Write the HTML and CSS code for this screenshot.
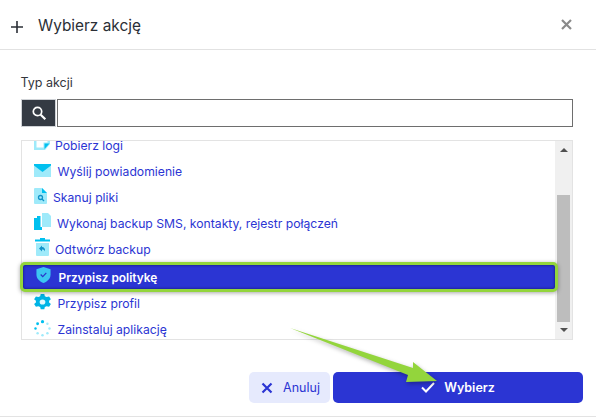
FILE: index.html
```html
<!DOCTYPE html>
<html lang="pl">
<head>
  <meta charset="UTF-8">
  <title>Wybierz akcję</title>
  <link rel="stylesheet" href="styles.css">
</head>
<body>
  <div class="dialog">
    <div class="header">
      <svg class="plus" width="14" height="14" viewBox="0 0 14 14"><path d="M7 1v12M1 7h12" stroke="#2b2f36" stroke-width="1.6"/></svg>
      <span class="title">Wybierz akcję</span>
      <svg class="close" width="11" height="11" viewBox="0 0 11 11"><path d="M1 1l9 9M10 1l-9 9" stroke="#8a8a8a" stroke-width="2.2"/></svg>
    </div>
    <div class="body">
      <div class="label">Typ akcji</div>
      <div class="search">
        <div class="search-btn">
          <svg width="16" height="16" viewBox="0 0 16 16"><circle cx="6.5" cy="6.5" r="4.2" fill="none" stroke="#fff" stroke-width="1.7"/><path d="M9.7 9.7l4.6 4.6" stroke="#fff" stroke-width="2.2"/></svg>
        </div>
        <input class="search-input" type="text">
      </div>
      <div class="list-box">
        <div class="list">
          <div class="rows">
            <div class="row">
              <svg class="ico ico-logs" width="16" height="18" viewBox="0 0 16 18"><path d="M0 0h16v12l-5 6H0z" fill="#9feafa"/><path d="M2.500 0h11v10.500H9.500V15.500H2.500z" fill="#fff"/><path d="M10.500 17l5-5.500h-5z" fill="#00c0ef"/></svg>
              <span>Pobierz logi</span>
            </div>
            <div class="row">
              <svg class="ico ico-mail" width="17" height="13" viewBox="0 0 17 13"><path d="M0 0h17v13H0z" fill="#9feafa"/><path d="M0 0h17v1.500L8.500 8 0 1.500z" fill="#00c0ef"/></svg>
              <span>Wyślij powiadomienie</span>
            </div>
            <div class="row">
              <svg class="ico ico-scan" width="13" height="16" viewBox="0 0 13 16"><path d="M0 1a1 1 0 0 1 1-1h7l5 5v10a1 1 0 0 1-1 1H1a1 1 0 0 1-1-1z" fill="#9feafa"/><path d="M8 0l5 5H8z" fill="#00c0ef"/><circle cx="6.500" cy="9.500" r="2" fill="none" stroke="#1193c9" stroke-width="1.300"/><path d="M8 11l2 2" stroke="#1193c9" stroke-width="1.300"/></svg>
              <span>Skanuj pliki</span>
            </div>
            <div class="row">
              <svg class="ico ico-copy" width="17" height="17" viewBox="0 0 17 17"><path d="M0 5h3v12H0z" fill="#00c0ef"/><path d="M3 3h5v14H3z" fill="#00c0ef"/><path d="M8 0h6l3 3v11H8z" fill="#9feafa"/><path d="M6.500 2h1.500v12H6.500z" fill="#fff"/></svg>
              <span>Wykonaj backup SMS, kontakty, rejestr połączeń</span>
            </div>
            <div class="row">
              <svg class="ico ico-restore" width="15" height="18" viewBox="0 0 15 18"><path d="M5 0h5v1.500H15V3.500H0V1.500H5z" fill="#00c0ef"/><path d="M1 5h13v12a1 1 0 0 1-1 1H2a1 1 0 0 1-1-1z" fill="#9feafa"/><path d="M7 7.500L4 10.500 7 13.500V11.500c1.500 0 2.500.5 3 2 .5-3-1-4.500-3-4.500z" fill="#1193c9"/></svg>
              <span>Odtwórz backup</span>
            </div>
            <div class="row active">
              <svg class="ico ico-shield" width="15" height="16" viewBox="0 0 15 17"><path d="M7.500 0L15 2.500V8c0 4.500-3.500 7.500-7.500 9C3.500 15.500 0 12.500 0 8V2.500z" fill="#3cc6f2"/><path d="M4.500 8l2.200 2.200L10.500 6.300" fill="none" stroke="#2b35c9" stroke-width="1.300"/></svg>
              <span>Przypisz politykę</span>
            </div>
            <div class="row">
              <svg class="ico ico-gear" width="17" height="16" viewBox="0 0 16 17" preserveAspectRatio="none"><path d="M6.300 0h3.400l.5 2.300 1.700 1 2.300-.7 1.700 3-1.700 1.500v2l1.700 1.500-1.700 3-2.300-.7-1.700 1-.5 2.300H6.300l-.5-2.300-1.700-1-2.300.7-1.700-3 1.700-1.500v-2L.1 5.600l1.700-3 2.300.7 1.700-1z" fill="#00b4e6"/><circle cx="8" cy="8.500" r="2.700" fill="#e2f8fd"/></svg>
              <span>Przypisz profil</span>
            </div>
            <div class="row">
              <svg class="ico ico-app" width="17" height="17" viewBox="0 0 18 18"><g fill="#00c0ef"><circle cx="9" cy="1.800" r="1.700"/><circle cx="3.800" cy="4" r="1.500"/><circle cx="1.600" cy="9" r="1.300"/></g><g fill="#9feafa"><circle cx="14.200" cy="4" r="1.300"/><circle cx="16.400" cy="9" r="1.300"/><circle cx="14.200" cy="14" r="1.300"/><circle cx="9" cy="16.200" r="1.300"/><circle cx="3.800" cy="14" r="1.300"/></g></svg>
              <span>Zainstaluj aplikację</span>
            </div>
          </div>
        </div>
        <div class="scrollbar">
          <div class="arrow-up"></div>
          <div class="track"><div class="thumb"></div></div>
          <div class="arrow-down"></div>
        </div>
      </div>
    </div>
    <div class="footer">
      <button class="btn cancel">
        <svg width="12" height="12" viewBox="0 0 12 12"><path d="M1.500 1.500l9 9M10.500 1.500l-9 9" stroke="#2b35d3" stroke-width="2.200"/></svg>
        Anuluj
      </button>
      <button class="btn confirm">
        <svg width="14" height="11" viewBox="0 0 14 11"><path d="M1 5.500l4 4 8-8.500" fill="none" stroke="#fff" stroke-width="2"/></svg>
        Wybierz
      </button>
    </div>
  </div>
  <svg class="pointer" width="150" height="58" viewBox="0 0 150 58"><path d="M0 1L123 41 123 35 147 54 116 55 118 48z" fill="#93d53c"/></svg>
</body>
</html>
```

FILE: styles.css
```css
html, body {
  margin: 0;
  padding: 0;
}
body {
  width: 596px;
  height: 417px;
  overflow: hidden;
  background: #fff;
  font-family: Inter, "Liberation Sans", sans-serif;
  position: relative;
}
.dialog {
  height: 417px;
  box-sizing: border-box;
  border-bottom: 1px solid #e3e3e3;
}
.header {
  height: 50px;
  border-bottom: 1px solid #e2e2e2;
  display: flex;
  align-items: center;
  padding: 0 24px 0 10px;
  box-sizing: border-box;
}
.plus {
  margin-top: 4px;
}
.title {
  margin-left: 14px;
  font-size: 15.4px;
  color: #2b2f36;
  flex: 1;
  margin-top: 2px;
}
.close {
  margin-top: -1px;
}
.body {
  padding: 25px 23px 0 21px;
}
.label {
  font-size: 12.5px;
  line-height: 16px;
  color: #33363c;
  margin-bottom: 8px;
  margin-left: -0.5px;
}
.search {
  display: flex;
  height: 28px;
}
.search-btn {
  width: 35px;
  background: #343a43;
  border: 1px solid #cfd2d6;
  box-sizing: border-box;
  display: flex;
  align-items: center;
  justify-content: center;
}
.search-input {
  flex: 1;
  margin-left: 1px;
  border: 1px solid #6e6e6e;
  box-sizing: border-box;
  padding: 0;
  outline: none;
}
.list-box {
  margin-top: 13px;
  height: 200px;
  border: 1px solid #e3e3e3;
  box-sizing: border-box;
  display: flex;
}
.list {
  flex: 1;
  clip-path: inset(0 -10px);
  position: relative;
  z-index: 1;
}
.rows {
  margin-top: -9px;
}
.row {
  height: 26px;
  display: flex;
  align-items: center;
  color: #2b35d3;
  font-size: 12.2px;
  padding-left: 12px;
}
.ico {
  flex: none;
}
.ico-logs { margin: 0 5px 8px 0; }
.ico-mail { margin: 0 6.5px 1px 0; }
.ico-scan { margin: 0 6px 2px 0; }
.ico-copy { margin: 0 6px 3px 0; }
.ico-restore { margin: 0 5px 4px 1px; }
.ico-shield { margin: 0 7.5px 4px 0; }
.ico-gear { margin: 0 6.5px 2px 0; }
.ico-app { margin: 0 6.5px 2px 0; }
.row.active {
  height: 30px;
  box-sizing: border-box;
  margin: 0 -3px -2px -2px;
  padding-left: 13px;
  background: #2b35d3;
  border: 3px solid #93d53c;
  border-radius: 5px;
  box-shadow: 0 1px 4px rgba(0, 0, 0, 0.35), inset 0 0 3px #10156e;
  color: #fff;
  font-size: 11.9px;
  font-weight: 600;
  position: relative;
}
.scrollbar {
  width: 17px;
  background: #f0f0f0;
  display: flex;
  flex-direction: column;
  align-items: center;
}
.arrow-up, .arrow-down {
  width: 0;
  height: 0;
  border-left: 4px solid transparent;
  border-right: 4px solid transparent;
}
.arrow-up {
  margin: 7px 0;
  border-bottom: 4px solid #505050;
}
.arrow-down {
  margin: 6px 0 7px;
  border-top: 4px solid #505050;
}
.track {
  flex: 1;
  width: 13px;
  padding-top: 36px;
  box-sizing: border-box;
}
.thumb {
  height: 127px;
  background: #bdbdbd;
}
.footer {
  display: flex;
  padding: 32px 13px 0 249px;
  gap: 3px;
}
.btn {
  height: 31px;
  border: 0;
  border-radius: 5px;
  padding: 0;
  display: flex;
  align-items: center;
  justify-content: center;
  font-family: inherit;
  font-size: 12.5px;
}
.cancel {
  width: 81px;
  gap: 10px;
  padding-left: 2px;
  background: #e6eafd;
  color: #2b35d3;
}
.confirm {
  width: 250px;
  gap: 9px;
  background: #2b35d3;
  color: #fff;
  font-weight: 600;
}
.pointer {
  position: absolute;
  left: 290px;
  top: 327px;
  filter: drop-shadow(1px 2px 2px rgba(0, 0, 0, 0.3));
}
```
